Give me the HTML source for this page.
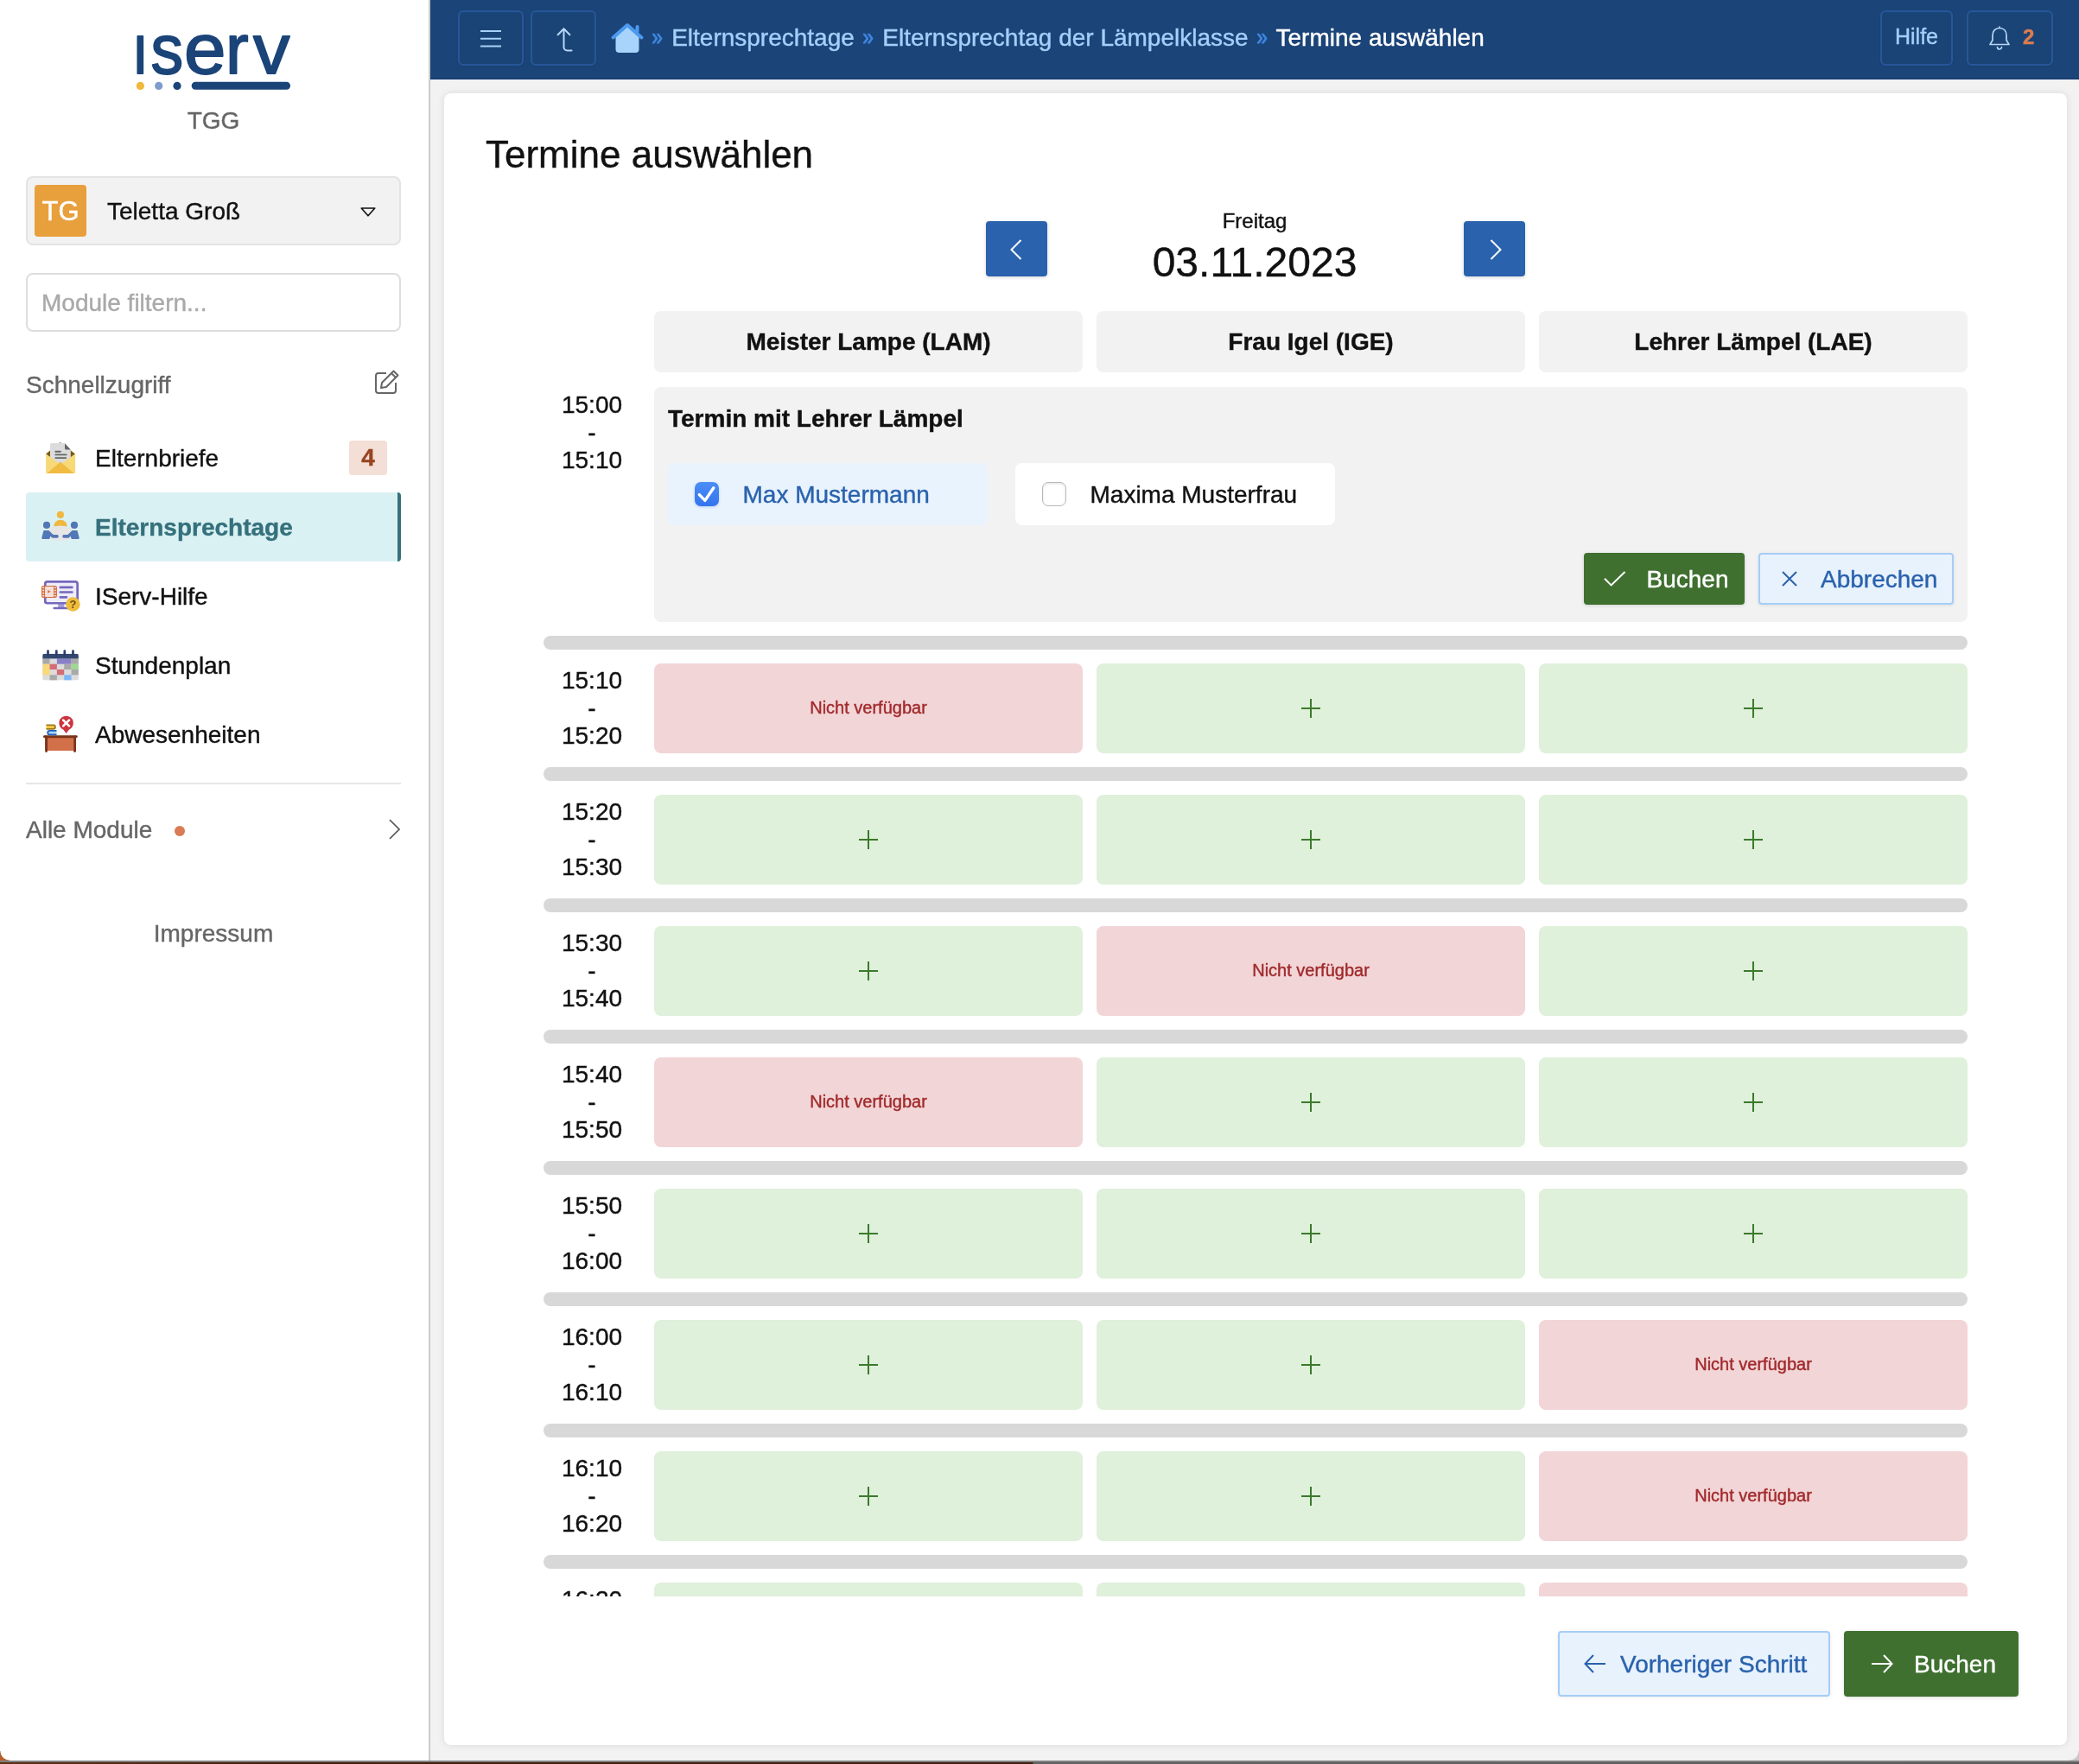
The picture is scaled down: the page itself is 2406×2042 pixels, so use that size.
<!DOCTYPE html>
<html lang="de">
<head>
<meta charset="utf-8">
<title>Termine auswählen - IServ</title>
<style>
*{box-sizing:border-box;margin:0;padding:0}
html,body{width:2406px;height:2042px;overflow:hidden;background:#f2f2f2}
body{font-family:"Liberation Sans",Arial,Helvetica,sans-serif;font-size:28px;color:#1a1a1a;position:relative;-webkit-text-stroke:0.4px currentColor;-webkit-font-smoothing:antialiased}
#root{position:absolute;left:0;top:0;width:2406px;height:2042px;will-change:transform}
svg{display:block;overflow:visible;position:absolute}
/* sidebar */
#sidebar{position:absolute;left:0;top:0;width:496px;height:2042px;background:#fff}
#sideborder{position:absolute;left:496px;top:0;width:2px;height:2042px;background:linear-gradient(90deg,#d2d2d2,#c4c4c4)}
#school{position:absolute;left:0;width:494px;top:124px;text-align:center;font-size:28px;line-height:32px;color:#666}
#user{position:absolute;left:30px;top:204px;width:434px;height:80px;background:#f2f2f2;border:2px solid #e3e3e3;border-radius:8px}
#avatar{position:absolute;left:8px;top:8px;width:60px;height:60px;background:#e8a03d;border-radius:4px;color:#fff;font-size:31px;line-height:61px;text-align:center}
#uname{position:absolute;left:92px;top:1px;line-height:76px;font-size:28px;color:#111;white-space:nowrap}
#filter{position:absolute;left:30px;top:316px;width:434px;height:68px;background:#fff;border:2px solid #dedede;border-radius:8px;line-height:66px;padding-left:16px;color:#a9a9a9;font-size:28px}
.sechead{position:absolute;left:30px;font-size:28px;line-height:32px;color:#666;white-space:nowrap}
.item{position:absolute;left:30px;width:434px;height:80px;border-radius:4px}
.item .lbl{position:absolute;left:80px;top:.7px;line-height:80px;font-size:28px;color:#111;white-space:nowrap}
.item.active{background:#daf1f4;border-right:4px solid #36717b}
.item.active .lbl{color:#35717c;font-weight:bold}
#badge{position:absolute;left:374px;top:20px;width:44px;height:40px;border-radius:4px;background:#f3dfd5;color:#994422;font-weight:bold;font-size:28px;line-height:40px;text-align:center}
#divider{position:absolute;left:30px;top:906px;width:434px;height:2px;background:#e6e6e6}
#impressum{position:absolute;left:0;width:494px;top:1064.700px;text-align:center;font-size:28px;line-height:32px;color:#666}
/* topbar */
#topbar{position:absolute;left:498px;top:0;width:1908px;height:92px;background:#1b4478;border-bottom:1px solid #12356b}
.tbtn{position:absolute;top:12px;height:64px;border:2px solid #265799;border-radius:6px;background:#1b4476;box-shadow:0 1px 3px rgba(0,0,0,.06);color:#a5cffa;font-size:24px;line-height:60px;white-space:nowrap}
#crumbs{position:absolute;left:752.5px;top:0;line-height:88px;font-size:28px;color:#a5cffa;white-space:nowrap}
#crumbs .s{color:#3f86e0;font-size:24px;position:relative;top:-2.5px;-webkit-text-stroke:0.8px #3f86e0;margin:0 2px 0 1.5px;display:inline-block;transform:scale(.95,1.18);line-height:30px}
#crumbs .cur{color:#fff}
/* card */
#card{position:absolute;left:514px;top:108px;width:1878px;height:1912px;background:#fff;border-radius:8px;box-shadow:0 0 8px rgba(0,0,0,.10)}
h1{position:absolute;left:562px;top:151px;font-size:44px;line-height:56px;font-weight:normal;color:#111;white-space:nowrap}
.navbtn{position:absolute;top:256px;width:71px;height:64px;background:#2a62ad;border-radius:4px;box-shadow:0 1px 4px rgba(0,0,0,.16)}
#dayname{position:absolute;left:1252px;width:400px;top:241px;text-align:center;font-size:24px;line-height:30px;color:#111}
#date{position:absolute;left:1152px;width:600px;top:275.500px;text-align:center;font-size:48px;line-height:56px;color:#111}
.colhead{position:absolute;top:360px;width:496px;height:71px;background:#f2f2f2;border-radius:8px;text-align:center;font-weight:bold;font-size:28px;line-height:71px;color:#111}
#panel{position:absolute;left:757px;top:448px;width:1520px;height:272px;background:#f2f2f2;border-radius:8px}
#panel h3{position:absolute;left:16px;top:20.500px;font-size:28px;line-height:32px;font-weight:bold;color:#111;white-space:nowrap}
.child{position:absolute;top:88px;width:370px;height:72px;border-radius:8px;font-size:28px;line-height:71px;white-space:nowrap}
.child .cb{position:absolute;left:31px;top:22px;width:28px;height:28px;border-radius:7px}
.child .nm{position:absolute;left:86.500px;top:.6px}
.btn{position:absolute;border-radius:4px;font-size:28px;white-space:nowrap}
.btn span{position:absolute;top:.6px}
.btn.green{background:#3f7030;color:#fff;box-shadow:0 1px 4px rgba(0,0,0,.14)}
.btn.light{background:#e8f2fd;color:#2a62ad;border:2px solid #a6cdf6;box-shadow:0 1px 4px rgba(0,0,0,.08)}
#scroll{position:absolute;left:0;top:0;width:2406px;height:1848px;overflow:hidden}
.time{position:absolute;left:629px;width:112px;text-align:center;font-size:28px;line-height:32px;color:#111}
.sep{position:absolute;left:629px;width:1648px;height:16px;border-radius:8px;background:#d8d8d8}
.cell{position:absolute;width:496px;height:104px;border-radius:8px}
.cell.free{background:#dff0db}
.cell.na{background:#f2d5d7;color:#a12a2c;font-size:20px;line-height:102.500px;text-align:center}
#bottomstrip{position:absolute;left:0;top:2038px;width:2406px;height:4px;background:linear-gradient(180deg,#858585 0,#7a7a7a 2px,transparent 2px),linear-gradient(90deg,#5e2f17 0,#45200f 300px,#43200f 1195px,#626262 1196px,#5a5a5a 2406px)}
#cornl{position:absolute;left:0;top:2027px;width:11px;height:11px;background:radial-gradient(circle at 100% 0,rgba(181,96,44,0) 10px,#b5602c 11px)}
#cornr{position:absolute;left:2395px;top:2027px;width:11px;height:11px;background:radial-gradient(circle at 0 0,rgba(200,202,202,0) 10px,#c6c8c8 11px)}
</style>
</head>
<body>
<div id="root">
<div id="sidebar"></div>
<div id="sideborder"></div>
<svg id="logo" style="left:140px;top:25px" width="220" height="90" viewBox="140 25 220 90">
<g font-family="'Liberation Sans',Arial,sans-serif" fill="#1b4478" stroke="#1b4478" stroke-width="1.8" stroke-linejoin="round">
<text transform="translate(153.5,85)" font-size="63.500">I</text>
<text transform="translate(174.5,85) scale(0.93,1)" font-size="81">s</text>
<text transform="translate(213.1,85) scale(1.076,1)" font-size="81">e</text>
<text transform="translate(261,85) scale(0.987,1)" font-size="81">r</text>
<text transform="translate(293,85) scale(1.048,1)" font-size="81">v</text>
</g>
<circle cx="162.4" cy="99.4" r="4.6" fill="#f0b93b"/>
<circle cx="183.7" cy="99.4" r="4.6" fill="#7f9bcc"/>
<circle cx="205" cy="99.4" r="4.6" fill="#1b4478"/>
<rect x="221.7" y="94.8" width="114.3" height="9" rx="4.500" fill="#1b4478"/>
</svg>
<div id="school">TGG</div>
<div id="user"><div id="avatar">TG</div><div id="uname">Teletta Groß</div>
<svg style="left:385px;top:34px" width="18" height="11" viewBox="0 0 18 11"><path d="M1.2 1h15.6L9 9.8z" fill="none" stroke="#111" stroke-width="1.6" stroke-linejoin="round"/></svg>
</div>
<div id="filter">Module filtern...</div>
<div class="sechead" style="top:430px">Schnellzugriff</div>
<svg style="left:433px;top:427px" width="30" height="30" viewBox="0 0 30 30"><path d="M25 16v9a3 3 0 0 1-3 3H5a3 3 0 0 1-3-3V8a3 3 0 0 1 3-3h9" fill="none" stroke="#666" stroke-width="2"/><path d="M22.5 2.5l5 5L14 21l-6 1 1-6z M20 5l5 5" fill="none" stroke="#666" stroke-width="2" stroke-linejoin="round"/></svg>
<div class="item" style="top:490px"><div class="lbl">Elternbriefe</div><div id="badge">4</div></div>
<div class="item active" style="top:570px"><div class="lbl">Elternsprechtage</div></div>
<div class="item" style="top:650px"><div class="lbl">IServ-Hilfe</div></div>
<div class="item" style="top:730px"><div class="lbl">Stundenplan</div></div>
<div class="item" style="top:810px"><div class="lbl">Abwesenheiten</div></div>
<!-- icon: Elternbriefe -->
<svg style="left:40px;top:500px" width="60" height="60" viewBox="0 0 60 60">
<path d="M13.1 25.500L29.700 12L47.100 25.500L30 38z" fill="#7a5c14"/>
<path d="M18 14.600a1.500 1.500 0 0 1 1.500-1.500H35L41.800 20.300V42H18z" fill="#dcdcdc"/>
<path d="M35 13.300L41.800 20.500H36.500a1.500 1.500 0 0 1-1.500-1.500z" fill="#666"/>
<path d="M24.300 22.800h5.600M24.300 26.400h12.400M24.300 30.100h12" stroke="#666" stroke-width="1.900" stroke-linecap="round"/>
<path d="M13.100 25.500L30 37.800L47.100 25.500V46.600a1.500 1.500 0 0 1-1.500 1.500H14.600a1.500 1.500 0 0 1-1.500-1.500z" fill="#f8d978"/>
<path d="M14.300 48.100L30 34.700L45.700 48.100z" fill="#f0bb40"/>
</svg>
<!-- icon: Elternsprechtage -->
<svg style="left:40px;top:580px" width="60" height="60" viewBox="0 0 60 60">
<circle cx="29.900" cy="15.900" r="4.100" fill="#f0b840"/>
<path d="M22.100 29.500a7.900 7.700 0 0 1 15.800 0z" fill="#f0b840"/>
<ellipse cx="30" cy="37.300" rx="16.800" ry="8.800" fill="#e6e6e6"/>
<g id="pers" fill="#5277b6">
<circle cx="14" cy="27.900" r="4.100"/>
<path d="M11.2 34h5.2l5.2 5h4.4a1.85 1.85 0 0 1 0 3.7h-4.7a2 2 0 0 1-1.6-.8l-1.2-1.5l-1.3 3.5H9.2a1 1 0 0 1-.9-1.3l2-7.800a1.1 1.1 0 0 1 .9-.8z"/>
</g>
<g fill="#5277b6" transform="translate(60,0) scale(-1,1)">
<circle cx="14" cy="27.900" r="4.100"/>
<path d="M11.2 34h5.2l5.2 5h4.4a1.85 1.85 0 0 1 0 3.7h-4.7a2 2 0 0 1-1.6-.8l-1.2-1.5l-1.3 3.5H9.2a1 1 0 0 1-.9-1.3l2-7.800a1.1 1.1 0 0 1 .9-.8z"/>
</g>
</svg>
<!-- icon: IServ-Hilfe -->
<svg style="left:40px;top:660px" width="60" height="60" viewBox="0 0 60 60">
<rect x="27.200" y="39" width="7.200" height="4.500" fill="#a59fd6"/>
<path d="M22.600 44h16" stroke="#7468bd" stroke-width="2.500" stroke-linecap="round"/>
<rect x="12.250" y="13.450" width="37.400" height="24.800" rx="2.500" fill="#eeedf8" stroke="#7468bd" stroke-width="2.700"/>
<path d="M29.800 19.900h13.600M29.800 25.500h13.600M29.800 31.300h7.200" stroke="#7468bd" stroke-width="2.700" stroke-linecap="round"/>
<rect x="8.500" y="18.500" width="16.900" height="13" rx="1.800" fill="#f4e0d8" stroke="#d66b40" stroke-width="1"/>
<rect x="8.500" y="18.500" width="3.600" height="13" fill="#d66b40"/><rect x="22" y="18.500" width="3.400" height="13" fill="#d66b40"/>
<g fill="#fbeee8"><rect x="9.200" y="19.600" width="1.900" height="1.500"/><rect x="9.200" y="22.700" width="1.900" height="1.500"/><rect x="9.200" y="25.800" width="1.900" height="1.500"/><rect x="9.200" y="28.900" width="1.900" height="1.500"/>
<rect x="22.800" y="19.600" width="1.900" height="1.500"/><rect x="22.800" y="22.700" width="1.900" height="1.500"/><rect x="22.800" y="25.800" width="1.900" height="1.500"/><rect x="22.800" y="28.900" width="1.900" height="1.500"/></g>
<path d="M15.400 22.900l3.200 1.900l-3.200 1.900z" fill="#d66b40"/>
<circle cx="44.400" cy="39.500" r="8.300" fill="#f0bc3c"/>
<text x="44.400" y="44" text-anchor="middle" font-family="'Liberation Sans',Arial,sans-serif" font-weight="bold" font-size="13" fill="#6b4e10" style="-webkit-text-stroke:0">?</text>
</svg>
<!-- icon: Stundenplan -->
<svg style="left:40px;top:740px" width="60" height="60" viewBox="0 0 60 60">
<defs><clipPath id="calclip"><rect x="9.200" y="16.700" width="41.700" height="30.900" rx="2.200"/></clipPath></defs>
<g clip-path="url(#calclip)">
<rect x="9.200" y="16.700" width="41.700" height="31" fill="#dcdcdc"/>
<g>
<rect x="9.200" y="22.400" width="8.340" height="6.300" fill="#a9a9a9"/><rect x="25.880" y="22.400" width="16.680" height="6.300" fill="#8a80c8"/><rect x="42.560" y="22.400" width="8.340" height="6.300" fill="#a9a9a9"/>
<rect x="9.200" y="28.700" width="8.340" height="12.600" fill="#f8d878"/><rect x="17.540" y="28.700" width="8.340" height="6.300" fill="#d46c76"/><rect x="34.220" y="28.700" width="8.340" height="6.300" fill="#a9a9a9"/><rect x="42.560" y="28.700" width="8.340" height="6.300" fill="#9fd890"/>
<rect x="25.880" y="35" width="8.340" height="6.300" fill="#d46c76"/><rect x="42.560" y="35" width="8.340" height="6.300" fill="#a9a9a9"/>
<rect x="17.540" y="41.300" width="8.340" height="6.300" fill="#a9a9a9"/><rect x="34.220" y="41.300" width="8.340" height="6.300" fill="#7cb8f8"/>
</g>
<rect x="9.200" y="16.700" width="41.700" height="5.700" fill="#33476f"/>
</g>
<path d="M15.500 13.500v5M25.300 13.500v5M34.800 13.500v5M44.500 13.500v5" stroke="#2b3f68" stroke-width="2.700" stroke-linecap="round"/>
</svg>
<!-- icon: Abwesenheiten -->
<svg style="left:40px;top:820px" width="60" height="60" viewBox="0 0 60 60">
<rect x="15" y="33" width="30.100" height="16" fill="#d2704a"/>
<path d="M13.550 33v16.500M46.550 33v16.500" stroke="#7a341b" stroke-width="2.900" stroke-linecap="round"/>
<rect x="10" y="31.300" width="39.800" height="2.900" rx="1.400" fill="#7a341b"/>
<path d="M13.500 19.300h8.200a2.250 2.250 0 0 1 0 4.500h-8.200" fill="#ffca4a" stroke="#9a7820" stroke-width="1.800" stroke-linejoin="round"/>
<path d="M25.500 25.900h-8a2.250 2.250 0 0 0 0 4.500h8" fill="#a8d4ff" stroke="#2060b8" stroke-width="1.800" stroke-linejoin="round"/>
<path d="M36.600 8.700a8.300 8.300 0 0 1 3.200 15.950L36.600 29l-3.200-4.350A8.300 8.300 0 0 1 36.600 8.700z" fill="#cc3540"/>
<path d="M33.200 13.600l6.800 6.800M40 13.600l-6.800 6.800" stroke="#fff" stroke-width="2.700" stroke-linecap="round"/>
</svg>
<div id="divider"></div>
<div class="sechead" style="top:944.500px">Alle Module</div>
<div style="position:absolute;left:202px;top:956px;width:12px;height:12px;border-radius:6px;background:#d97b55"></div>
<svg style="left:449px;top:947px" width="16" height="26" viewBox="0 0 16 26"><path d="M2 2l11 11L2 24" fill="none" stroke="#555" stroke-width="1.700"/></svg>
<div id="impressum">Impressum</div>

<div id="topbar"></div>
<div class="tbtn" style="left:530px;width:76px"><svg style="left:24px;top:21px" width="24" height="20" viewBox="0 0 24 20"><path d="M0 1h24M0 9.700h24M0 18.500h24" stroke="#a8d0f8" stroke-width="1.900" fill="none"/></svg></div>
<div class="tbtn" style="left:614px;width:76px"><svg style="left:28px;top:17px" width="22" height="30" viewBox="0 0 22 30"><path d="M1.6 9.2L8.5 2.200L15.400 9.200M8.500 2.200v21.300a4 4 0 0 0 4 4H17.600" stroke="#b5d6f8" stroke-width="2" fill="none" stroke-linecap="round" stroke-linejoin="round"/></svg></div>
<svg style="left:706px;top:26px" width="40" height="36" viewBox="0 0 40 36"><path d="M6.500 17L20 5L33.500 17V31a4 4 0 0 1-4 4H10.500a4 4 0 0 1-4-4z" fill="#a8d3fa"/><path d="M3.500 17.500L20 3L36.500 17.500M31.500 11V5" fill="none" stroke="#4a9af0" stroke-width="4" stroke-linecap="round" stroke-linejoin="round"/></svg>
<div id="crumbs"><span class="s">»</span> Elternsprechtage <span class="s">»</span> Elternsprechtag der Lämpelklasse <span class="s">»</span> <span class="cur">Termine auswählen</span></div>
<div class="tbtn" style="left:2176px;width:84px;text-align:center;font-size:25px;line-height:57.500px">Hilfe</div>
<div class="tbtn" style="left:2276px;width:100px"><svg style="left:22.700px;top:16px" width="26" height="28" viewBox="0 0 26 28"><path d="M13 2.5c-5 0-8 3.5-8 8.5v5.5L2 21.5h22L21 16.500V11c0-5-3-8.500-8-8.500zM13 2.500V1M10.500 24.500a2.500 2.500 0 0 0 5 0" fill="none" stroke="#b5d6f8" stroke-width="1.700" stroke-linejoin="round" stroke-linecap="round"/></svg><span style="position:absolute;left:63px;top:-1.300px;color:#dc7c50;font-weight:bold;font-size:24px">2</span></div>

<div id="card"></div>
<div id="scroll">
<h1>Termine auswählen</h1>
<div class="navbtn" style="left:1141px"><svg style="left:28px;top:21px" width="14" height="24" viewBox="0 0 14 24"><path d="M12.500 1L1.500 12l11 11" fill="none" stroke="#fff" stroke-width="2"/></svg></div>
<div class="navbtn" style="left:1694px"><svg style="left:30px;top:21px" width="14" height="24" viewBox="0 0 14 24"><path d="M1.500 1l11 11l-11 11" fill="none" stroke="#fff" stroke-width="2"/></svg></div>
<div id="dayname">Freitag</div>
<div id="date">03.11.2023</div>
<div class="colhead" style="left:757px">Meister Lampe (LAM)</div>
<div class="colhead" style="left:1269px">Frau Igel (IGE)</div>
<div class="colhead" style="left:1781px">Lehrer Lämpel (LAE)</div>
<div class="time" style="top:452.500px">15:00<br>-<br>15:10</div>
<div id="panel">
<h3>Termin mit Lehrer Lämpel</h3>
<div class="child" style="left:16px;background:#e9f3fe;color:#2a62ad"><div class="cb" style="background:linear-gradient(180deg,#4a8ef6,#3474ee);box-shadow:0 1px 3px rgba(40,90,200,.25)"><svg style="left:0;top:0" width="28" height="28" viewBox="0 0 28 28"><path d="M5.300 14.600L11.900 21.400L21.800 6.800" fill="none" stroke="#fff" stroke-width="3.400" stroke-linecap="round" stroke-linejoin="round"/></svg></div><div class="nm">Max Mustermann</div></div>
<div class="child" style="left:418px;background:#fff;color:#111"><div class="cb" style="background:#fff;border:1.500px solid #b9b9b9;box-shadow:inset 0 1px 3px rgba(0,0,0,.12)"></div><div class="nm">Maxima Musterfrau</div></div>
<div class="btn green" style="left:1076px;top:192px;width:186px;height:60px;line-height:60px"><svg style="left:22.500px;top:21px" width="26" height="18" viewBox="0 0 26 18"><path d="M1 8.800l7.600 7.600L24.500 1" fill="none" stroke="#fff" stroke-width="2"/></svg><span style="left:72.500px">Buchen</span></div>
<div class="btn light" style="left:1278px;top:192px;width:226px;height:60px;line-height:56px"><svg style="left:24.500px;top:19px" width="18" height="18" viewBox="0 0 18 18"><path d="M1 1l16 16M17 1L1 17" fill="none" stroke="#2a62ad" stroke-width="2"/></svg><span style="left:70px">Abbrechen</span></div>
</div>
<div class="sep" style="top:736px"></div>

<div class="time" style="top:772.3px">15:10<br>-<br>15:20</div>
<div class="cell na" style="left:757px;top:768px">Nicht verfügbar</div>
<div class="cell free" style="left:1269px;top:768px"></div>
<svg style="left:1506px;top:808.5px" width="22" height="22" viewBox="0 0 22 22"><path d="M11 0v22M0 11h22" stroke="#3c7a2c" stroke-width="2" fill="none"/></svg>
<div class="cell free" style="left:1781px;top:768px"></div>
<svg style="left:2018px;top:808.5px" width="22" height="22" viewBox="0 0 22 22"><path d="M11 0v22M0 11h22" stroke="#3c7a2c" stroke-width="2" fill="none"/></svg>
<div class="sep" style="top:888px"></div>
<div class="time" style="top:924.3px">15:20<br>-<br>15:30</div>
<div class="cell free" style="left:757px;top:920px"></div>
<svg style="left:994px;top:960.5px" width="22" height="22" viewBox="0 0 22 22"><path d="M11 0v22M0 11h22" stroke="#3c7a2c" stroke-width="2" fill="none"/></svg>
<div class="cell free" style="left:1269px;top:920px"></div>
<svg style="left:1506px;top:960.5px" width="22" height="22" viewBox="0 0 22 22"><path d="M11 0v22M0 11h22" stroke="#3c7a2c" stroke-width="2" fill="none"/></svg>
<div class="cell free" style="left:1781px;top:920px"></div>
<svg style="left:2018px;top:960.5px" width="22" height="22" viewBox="0 0 22 22"><path d="M11 0v22M0 11h22" stroke="#3c7a2c" stroke-width="2" fill="none"/></svg>
<div class="sep" style="top:1040px"></div>
<div class="time" style="top:1076.3px">15:30<br>-<br>15:40</div>
<div class="cell free" style="left:757px;top:1072px"></div>
<svg style="left:994px;top:1112.5px" width="22" height="22" viewBox="0 0 22 22"><path d="M11 0v22M0 11h22" stroke="#3c7a2c" stroke-width="2" fill="none"/></svg>
<div class="cell na" style="left:1269px;top:1072px">Nicht verfügbar</div>
<div class="cell free" style="left:1781px;top:1072px"></div>
<svg style="left:2018px;top:1112.5px" width="22" height="22" viewBox="0 0 22 22"><path d="M11 0v22M0 11h22" stroke="#3c7a2c" stroke-width="2" fill="none"/></svg>
<div class="sep" style="top:1192px"></div>
<div class="time" style="top:1228.3px">15:40<br>-<br>15:50</div>
<div class="cell na" style="left:757px;top:1224px">Nicht verfügbar</div>
<div class="cell free" style="left:1269px;top:1224px"></div>
<svg style="left:1506px;top:1264.5px" width="22" height="22" viewBox="0 0 22 22"><path d="M11 0v22M0 11h22" stroke="#3c7a2c" stroke-width="2" fill="none"/></svg>
<div class="cell free" style="left:1781px;top:1224px"></div>
<svg style="left:2018px;top:1264.5px" width="22" height="22" viewBox="0 0 22 22"><path d="M11 0v22M0 11h22" stroke="#3c7a2c" stroke-width="2" fill="none"/></svg>
<div class="sep" style="top:1344px"></div>
<div class="time" style="top:1380.3px">15:50<br>-<br>16:00</div>
<div class="cell free" style="left:757px;top:1376px"></div>
<svg style="left:994px;top:1416.5px" width="22" height="22" viewBox="0 0 22 22"><path d="M11 0v22M0 11h22" stroke="#3c7a2c" stroke-width="2" fill="none"/></svg>
<div class="cell free" style="left:1269px;top:1376px"></div>
<svg style="left:1506px;top:1416.5px" width="22" height="22" viewBox="0 0 22 22"><path d="M11 0v22M0 11h22" stroke="#3c7a2c" stroke-width="2" fill="none"/></svg>
<div class="cell free" style="left:1781px;top:1376px"></div>
<svg style="left:2018px;top:1416.5px" width="22" height="22" viewBox="0 0 22 22"><path d="M11 0v22M0 11h22" stroke="#3c7a2c" stroke-width="2" fill="none"/></svg>
<div class="sep" style="top:1496px"></div>
<div class="time" style="top:1532.3px">16:00<br>-<br>16:10</div>
<div class="cell free" style="left:757px;top:1528px"></div>
<svg style="left:994px;top:1568.5px" width="22" height="22" viewBox="0 0 22 22"><path d="M11 0v22M0 11h22" stroke="#3c7a2c" stroke-width="2" fill="none"/></svg>
<div class="cell free" style="left:1269px;top:1528px"></div>
<svg style="left:1506px;top:1568.5px" width="22" height="22" viewBox="0 0 22 22"><path d="M11 0v22M0 11h22" stroke="#3c7a2c" stroke-width="2" fill="none"/></svg>
<div class="cell na" style="left:1781px;top:1528px">Nicht verfügbar</div>
<div class="sep" style="top:1648px"></div>
<div class="time" style="top:1684.3px">16:10<br>-<br>16:20</div>
<div class="cell free" style="left:757px;top:1680px"></div>
<svg style="left:994px;top:1720.5px" width="22" height="22" viewBox="0 0 22 22"><path d="M11 0v22M0 11h22" stroke="#3c7a2c" stroke-width="2" fill="none"/></svg>
<div class="cell free" style="left:1269px;top:1680px"></div>
<svg style="left:1506px;top:1720.5px" width="22" height="22" viewBox="0 0 22 22"><path d="M11 0v22M0 11h22" stroke="#3c7a2c" stroke-width="2" fill="none"/></svg>
<div class="cell na" style="left:1781px;top:1680px">Nicht verfügbar</div>
<div class="sep" style="top:1800px"></div>
<div class="time" style="top:1836.3px">16:20<br>-<br>16:30</div>
<div class="cell free" style="left:757px;top:1832px"></div>
<svg style="left:994px;top:1872.5px" width="22" height="22" viewBox="0 0 22 22"><path d="M11 0v22M0 11h22" stroke="#3c7a2c" stroke-width="2" fill="none"/></svg>
<div class="cell free" style="left:1269px;top:1832px"></div>
<svg style="left:1506px;top:1872.5px" width="22" height="22" viewBox="0 0 22 22"><path d="M11 0v22M0 11h22" stroke="#3c7a2c" stroke-width="2" fill="none"/></svg>
<div class="cell na" style="left:1781px;top:1832px">Nicht verfügbar</div>
<div class="sep" style="top:1952px"></div>
</div>
<div id="footer">
<div class="btn light" style="left:1803px;top:1888px;width:315px;height:76px;line-height:72px"><svg style="left:28px;top:25px" width="26" height="22" viewBox="0 0 26 22"><path d="M25 11H2M11 1L1.5 11L11 21" stroke="#2a62ad" stroke-width="2" fill="none"/></svg><span style="left:70px">Vorheriger Schritt</span></div>
<div class="btn green" style="left:2134px;top:1888px;width:202px;height:76px;line-height:76px"><svg style="left:30.500px;top:27px" width="26" height="22" viewBox="0 0 26 22"><path d="M1 11H24M15 1L24.5 11L15 21" stroke="#fff" stroke-width="2" fill="none"/></svg><span style="left:81px">Buchen</span></div>
</div>
<div id="cornl"></div><div id="cornr"></div>
<div id="bottomstrip"></div>
</div>
</body>
</html>
